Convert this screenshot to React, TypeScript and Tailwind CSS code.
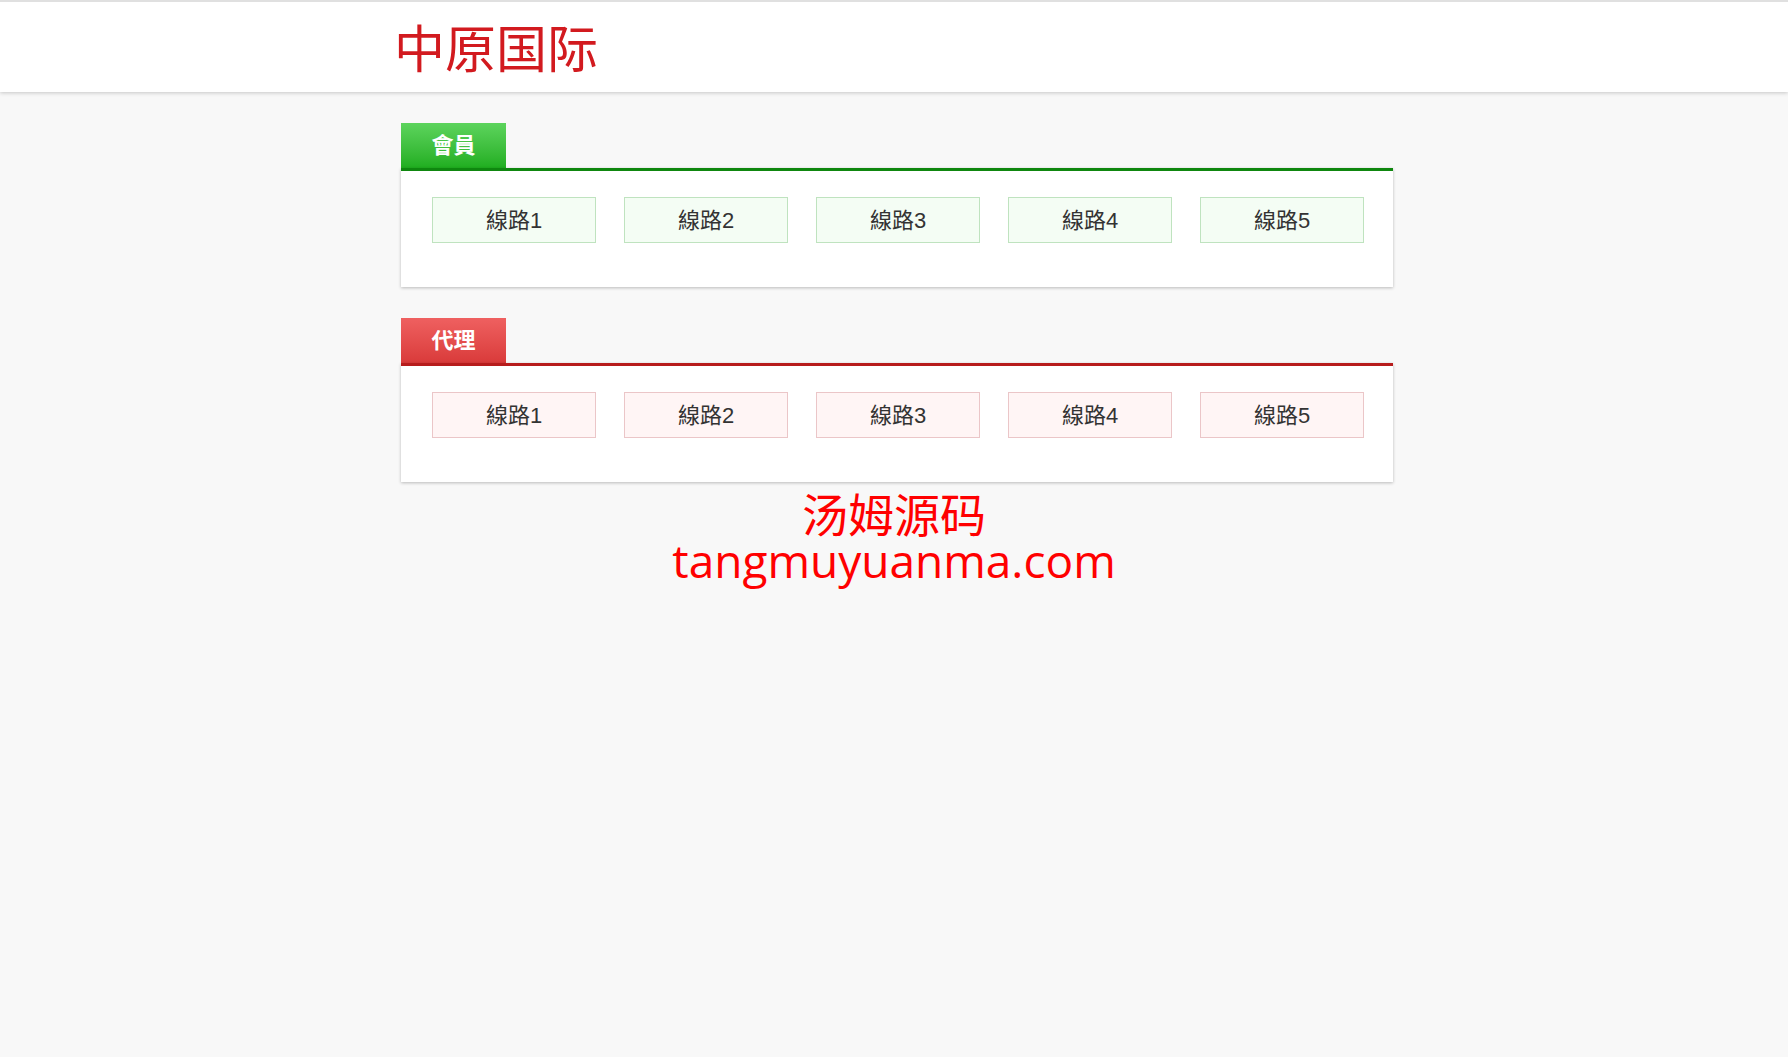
const lines = ["線路1", "線路2", "線路3", "線路4", "線路5"];

type Tone = "green" | "red";

function Section({ title, tone }: { title: string; tone: Tone }) {
  const green = tone === "green";
  return (
    <section className="ml-[7px] w-[992px]">
      <div
        className={
          "flex h-[45px] w-[105px] items-center justify-center text-[22px] font-bold text-white " +
          (green
            ? "bg-gradient-to-b from-[#5cd45c] to-[#1fae1f]"
            : "bg-gradient-to-b from-[#ef6060] to-[#d93a3a]")
        }
      >
        {title}
      </div>
      <div
        className={
          "border-t-[3px] bg-white pb-[44px] pl-[31px] pr-[29px] pt-[26px] shadow-[0_1px_3px_rgba(0,0,0,0.25)] " +
          (green ? "border-[#0f870f]" : "border-[#b71c1c]")
        }
      >
        <div className="flex gap-[28px]">
          {lines.map((l) => (
            <a
              key={l}
              href="#"
              className={
                "flex h-[46px] w-[164px] items-center justify-center border text-[22px] text-[#333]" +
                (green
                  ? " border-[#bfe3bf] bg-[#f4fdf4]"
                  : " border-[#ebc6c8] bg-[#fff5f5]")
              }
            >
              {l}
            </a>
          ))}
        </div>
      </div>
    </section>
  );
}

export default function App() {
  return (
    <div
      className="min-h-[1057px] bg-[#f8f8f8]"
      style={{ fontFamily: '"Liberation Sans", "Noto Sans CJK TC", sans-serif' }}
    >
      <header className="relative z-10 h-[92px] border-t-2 border-[#e0e0e0] bg-white shadow-[0_1px_4px_rgba(0,0,0,0.2)]">
        <div className="mx-auto w-[1000px]">
          <h1
            className="pt-[11px] text-[51px] leading-[66px] text-[#d21a1f]"
            style={{ fontFamily: '"Noto Sans CJK SC", sans-serif' }}
          >
            中原国际
          </h1>
        </div>
      </header>
      <main className="mx-auto flex w-[1000px] flex-col gap-[31px] pt-[31px]">
        <Section title="會員" tone="green" />
        <Section title="代理" tone="red" />
      </main>
      <p
        className="mt-[9px] whitespace-pre-line text-center text-[46px] leading-[46px] text-[#ff0000]"
        style={{ fontFamily: '"Open Sans", "Noto Sans CJK SC", sans-serif' }}
      >
        {"汤姆源码\ntangmuyuanma.com"}
      </p>
    </div>
  );
}
